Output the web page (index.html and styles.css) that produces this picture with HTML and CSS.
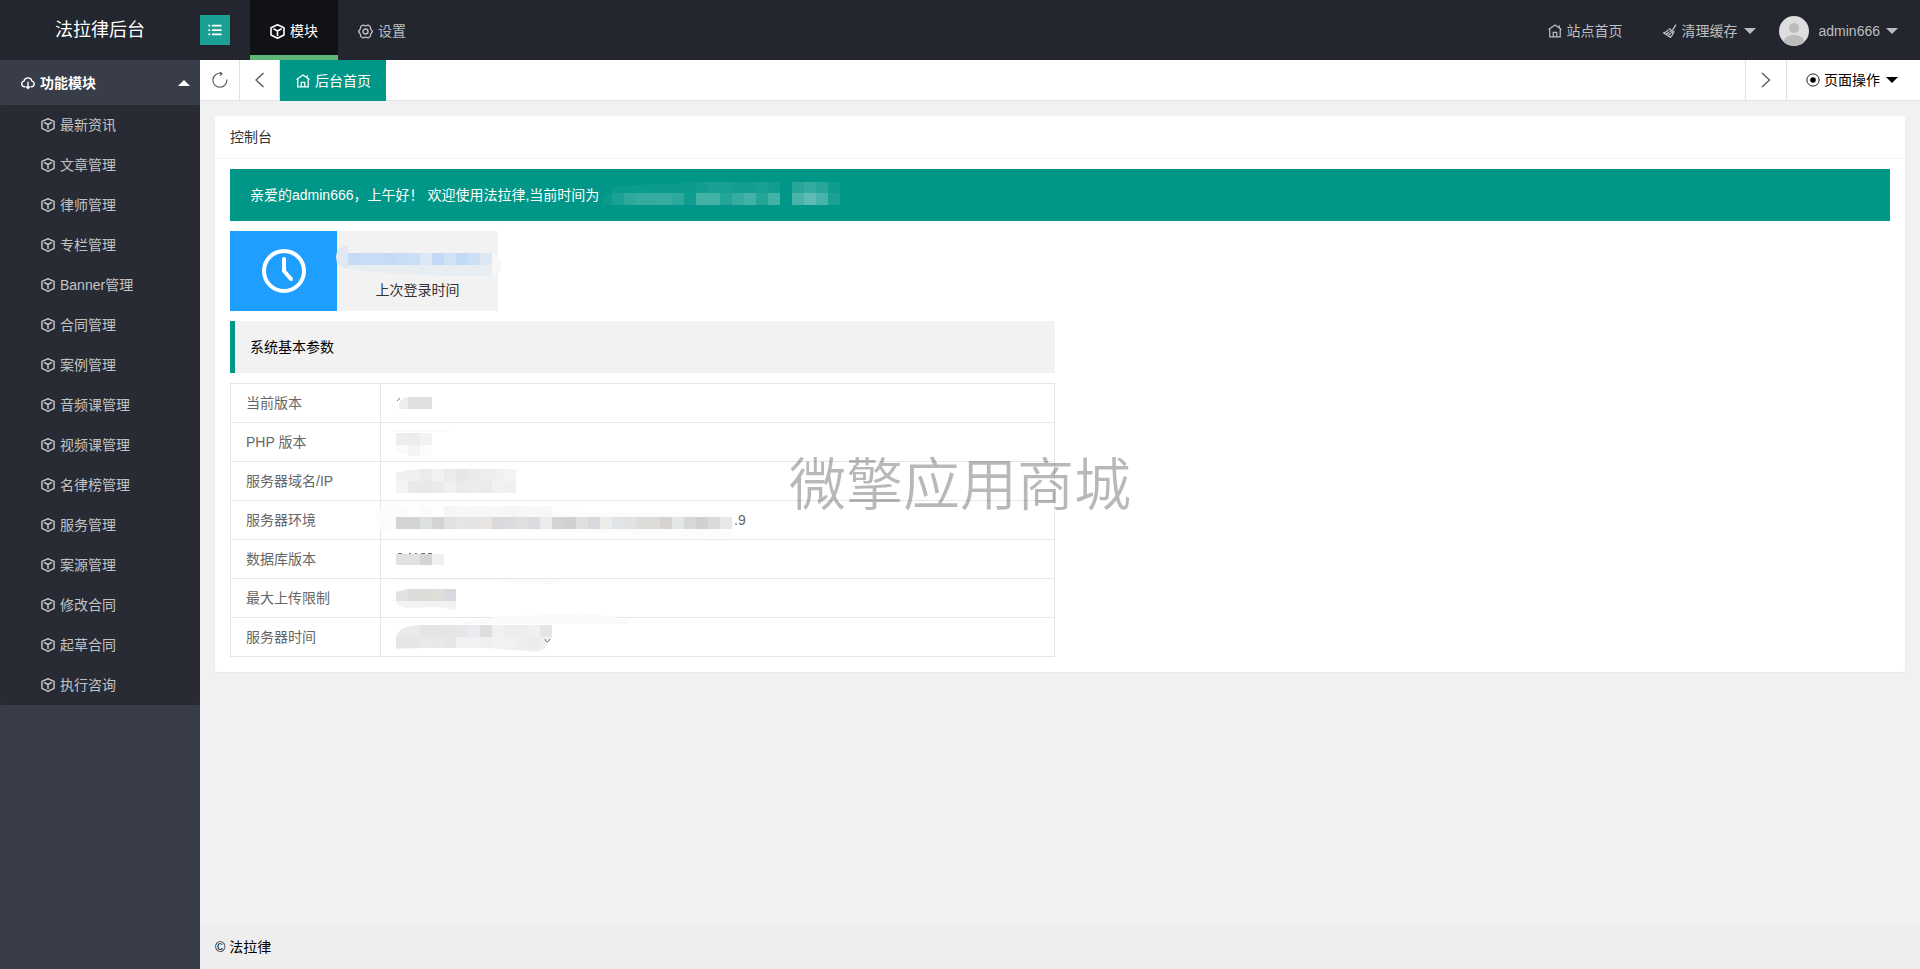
FILE: index.html
```html
<!DOCTYPE html>
<html lang="zh-CN">
<head>
<meta charset="utf-8">
<title>法拉律后台</title>
<link rel="stylesheet" href="styles.css">
</head>
<body>
<svg class="sprite" aria-hidden="true">
  <symbol id="cube" viewBox="0 0 16 16"><path d="M8 .9 14.900 3.900v7.900L8 15.200 1.100 11.800V3.900zM4.200 5.400 8 7.400l4-2.100M8 7.400v4.800" fill="none" stroke="currentColor" stroke-width="1.700" stroke-linejoin="round" stroke-linecap="round"/></symbol>
  <symbol id="gear" viewBox="0 0 16 16"><path d="M5.300 1.100 8 2l2.700-.9 2.300 1.500.5 2.700L15.400 8l-1.900 2.700-.5 2.700-2.300 1.500L8 14l-2.700.9L3 13.400l-.5-2.700L.6 8l1.900-2.700L3 2.600z" fill="none" stroke="currentColor" stroke-width="1.400" stroke-linejoin="round"/><circle cx="8" cy="8" r="2.700" fill="none" stroke="currentColor" stroke-width="1.500"/></symbol>
  <symbol id="home" viewBox="0 0 16 16"><path d="M.6 6.400 8 1.200l7.400 5.200M2 6v8.700h12V6M12.800 1.500v3M6 14V9.500h4V14" fill="none" stroke="currentColor" stroke-width="1.400"/></symbol>
  <symbol id="broom" viewBox="0 0 16 16"><path d="M14.800.8 11 7M6.600 5.200l6.600 4.300M6.300 6.500Q4 9.500.8 10.200L8.500 15.200Q11 13 12 9.500M3.500 11.500l3.500-2M6 13.200l3-2.700M7.500 8l3.500 2.200" fill="none" stroke="currentColor" stroke-width="1.500"/></symbol>
  <symbol id="cloud" viewBox="0 0 16 16"><path d="M5 12.300H4A3.300 3.300 0 0 1 3.300 5.800 4.800 4.800 0 0 1 12.600 5.800 3.300 3.300 0 0 1 12 12.300H11M8 6.500v7.500M6 12l2 2.200L10 12" fill="none" stroke="currentColor" stroke-width="1.600"/></symbol>
  <symbol id="list" viewBox="0 0 16 16"><path d="M4.500 3H15.500M4.500 8H15.500M4.500 13H15.500M.5 3h2M.5 8h2M.5 13h2" fill="none" stroke="currentColor" stroke-width="2"/></symbol>
  <symbol id="refresh" viewBox="0 0 16 16"><path d="M9 1.300A7 7 0 1 0 14.900 7.500M7.500 0 10 1.500 8 3.600" fill="none" stroke="currentColor" stroke-width="1.100"/></symbol>
  <symbol id="left" viewBox="0 0 16 16"><path d="M11.500 1 4 8l7.500 7" fill="none" stroke="currentColor" stroke-width="1.300"/></symbol>
  <symbol id="right" viewBox="0 0 16 16"><path d="m4 1 7.500 7L4 15" fill="none" stroke="currentColor" stroke-width="1.300"/></symbol>
  <symbol id="radio" viewBox="0 0 16 16"><circle cx="8" cy="8" r="7" fill="none" stroke="currentColor"/><circle cx="8" cy="8" r="3.200" fill="currentColor"/></symbol>
</svg>
<div class="app">
  <header class="header">
    <div class="brand">法拉律后台</div>
    <button class="toggle" type="button" aria-label="切换菜单"><svg class="icon"><use href="#list"/></svg></button>
    <nav class="topnav">
      <a class="active" href="#"><svg class="icon"><use href="#cube"/></svg>模块</a>
      <a href="#"><svg class="icon"><use href="#gear"/></svg>设置</a>
    </nav>
    <nav class="usernav">
      <a class="site" href="#"><svg class="icon"><use href="#home"/></svg>站点首页</a>
      <a class="cache" href="#"><svg class="icon"><use href="#broom"/></svg>清理缓存<span class="caret"></span></a>
      <a class="user" href="#"><svg class="avatar" viewBox="0 0 30 30"><circle cx="15" cy="15" r="15" fill="#dedede"/><circle cx="15" cy="12" r="5" fill="#bcbcbc"/><path d="M5 26.200V24.500Q7 19 15 19t10 5.500V26.200Q21 30 15 30T5 26.200" fill="#bcbcbc"/></svg>admin666<span class="caret"></span></a>
    </nav>
  </header>
  <div class="body">
    <aside class="sidebar">
      <button class="group" type="button"><svg class="icon"><use href="#cloud"/></svg>功能模块<span class="caret up"></span></button>
      <nav class="menu">
        <a href="#"><svg class="icon"><use href="#cube"/></svg>最新资讯</a>
        <a href="#"><svg class="icon"><use href="#cube"/></svg>文章管理</a>
        <a href="#"><svg class="icon"><use href="#cube"/></svg>律师管理</a>
        <a href="#"><svg class="icon"><use href="#cube"/></svg>专栏管理</a>
        <a href="#"><svg class="icon"><use href="#cube"/></svg>Banner管理</a>
        <a href="#"><svg class="icon"><use href="#cube"/></svg>合同管理</a>
        <a href="#"><svg class="icon"><use href="#cube"/></svg>案例管理</a>
        <a href="#"><svg class="icon"><use href="#cube"/></svg>音频课管理</a>
        <a href="#"><svg class="icon"><use href="#cube"/></svg>视频课管理</a>
        <a href="#"><svg class="icon"><use href="#cube"/></svg>名律榜管理</a>
        <a href="#"><svg class="icon"><use href="#cube"/></svg>服务管理</a>
        <a href="#"><svg class="icon"><use href="#cube"/></svg>案源管理</a>
        <a href="#"><svg class="icon"><use href="#cube"/></svg>修改合同</a>
        <a href="#"><svg class="icon"><use href="#cube"/></svg>起草合同</a>
        <a href="#"><svg class="icon"><use href="#cube"/></svg>执行咨询</a>
      </nav>
    </aside>
    <div class="main">
      <div class="tabs">
        <button class="tool" type="button" aria-label="刷新"><svg class="icon big"><use href="#refresh"/></svg></button>
        <button class="tool" type="button" aria-label="向左"><svg class="icon big"><use href="#left"/></svg></button>
        <a class="tab" href="#"><svg class="icon"><use href="#home"/></svg>后台首页</a>
        <button class="tool next" type="button" aria-label="向右"><svg class="icon big"><use href="#right"/></svg></button>
        <button class="ops" type="button"><svg class="icon"><use href="#radio"/></svg>页面操作<span class="caret"></span></button>
      </div>
      <main class="content">
        <section class="card">
          <h1 class="card-title">控制台</h1>
          <div class="card-body">
            <div class="welcome">
              <span>亲爱的admin666，上午好！ 欢迎使用法拉律,当前时间为</span>
              <svg class="mosaic welcome-mask" id="m-welcome"></svg>
            </div>
            <div class="stat">
              <div class="stat-icon"><svg viewBox="0 0 46 46"><circle cx="23" cy="23" r="20" fill="none" stroke="#fff" stroke-width="4"/><path d="M23 11v12l7 8" fill="none" stroke="#fff" stroke-width="4" stroke-linecap="round" stroke-linejoin="round"/></svg></div>
              <div class="stat-info">
                <svg class="mosaic login-mask" id="m-login"></svg>
                <div>上次登录时间</div>
              </div>
            </div>
            <div class="params">
              <h2 class="quote">系统基本参数</h2>
              <table class="table">
                <tr><th scope="row">当前版本</th><td><svg class="mosaic" id="m0"></svg></td></tr>
                <tr><th scope="row">PHP 版本</th><td><svg class="mosaic" id="m1"></svg></td></tr>
                <tr><th scope="row">服务器域名/IP</th><td><svg class="mosaic" id="m2"></svg></td></tr>
                <tr><th scope="row">服务器环境</th><td><div class="env"><svg class="mosaic env-mask" id="m3"></svg>.9</div></td></tr>
                <tr><th scope="row">数据库版本</th><td><svg class="mosaic" id="m4"></svg></td></tr>
                <tr><th scope="row">最大上传限制</th><td><svg class="mosaic" id="m5"></svg></td></tr>
                <tr><th scope="row">服务器时间</th><td><svg class="mosaic" id="m6"></svg></td></tr>
              </table>
            </div>
          </div>
        </section>
      </main>
      <footer class="footer">© 法拉律</footer>
    </div>
  </div>
  <div class="watermark">微擎应用商城</div>
</div>
<script src="mosaic.js"></script>
</body>
</html>
```
FILE: mosaic.js
```js
// Draws the blurred-out values: smudge paths, rows of 12px blocks, leftover strokes.
const masks = {
  'm-welcome': {
    rows: [
      [12, -2, 11, '. . . . . . #0b9b8d #119d90 #1ba194 #17a093 #119d90 #119d90 #17a093 #119d90 . #27a699 #33ab9f #27a699 #0f9d8f'],
      [12, 9, 12, '#1ba194 #2da99c #33ab9f #33ab9f #36aca0 #2da99c #0f9d8f #42b1a6 #42b1a6 #22a497 #36aca0 #42b1a6 #22a497 #42b1a6 . #48b3a8 #5dbcb2 #48b3a8 #1ba194']
    ],
    smudges: [['M2 21V14Q5 8 12 8V21zM12 9V2L84-1V9z', '#0b9b8d']]
  },
  'm-login': {
    smudges: [
      ['M11 0Q-1 2-1 12T11 24z', '#dfe9f3'],
      ['M155 8Q164 12 164 21T155 32z', '#f7f7f8'],
      ['M11 20H155V31L110 31 30 27 11 23z', '#e8edf2']
    ],
    rows: [[11, 8, 12, '#c5daf6 #c8dcf5 #c8dcf5 #c5daf6 #c8dcf5 #cadff4 #dce8f5 #c2d8f6 #d0e2f4 #c0dbf5 #cddff5 #dce7f4']]
  },
  m0: {
    smudges: [['M3 16Q3 4 12 4V16z', '#ededed']],
    rows: [[12, 4, 12, '#dfdfdf #dedfdf']],
    strokes: 'M1 8 4 5'
  },
  m1: {
    smudges: [['M-4-1 10-3 54-1V0H-4zM0 13H12V23Q0 22 0 13', '#fafafa']],
    rows: [[0, 1, 12, '#ededed #ececec #f2f2f2'], [12, 13, 11, '#f4f4f4 #fbfbfb']]
  },
  m2: {
    smudges: [['M0 10V2Q8-1 24-2V10z', '#f0f0f0']],
    rows: [
      [24, -2, 12, '#ebebeb #f1f2f4 #ebebeb #e6e6e6 #eaeaea #eeeeee #efefef #f4f4f4'],
      [0, 10, 12, '#f4f4f4 #e9e9e9 #e8e8e8 #eaeaea #f2f0ef #e9ebed #ececec #ebebeb #f2f2f2 #eef0f0']
    ]
  },
  m3: {
    smudges: [['M-10-5H54L110-2H156V1L230 3 325 3Q338 7 338 17T327 27L250 25 115 20H-15Q-19 15-19 7T-10-5', '#fcfcfc']],
    rows: [
      [0, -4, 11, '#fbfbfb #fefefe #fbfbfb #fefefe #f6f6f6 #f8f8f8 #f7f7f7 #f7f7f7 #f8f8f8 #f6f6f6 #f7f7f7 #f8f8f8 #f7f7f7'],
      [0, 7, 12, '#d4d3d2 #d4d4d4 #dce0df #d5d3d1 #e1e1e1 #e5e5e5 #e5e4e2 #e8e5e3 #d9dadc #dadbde #dfdfdf #dbdce0 #eeebea #d3d3d4 #d0d0d0 #dfe1e0 #d8d9dd #eeecea #e1e4e7 #e2e2e2 #dddcd9 #dcdcda #d5d2d0 #e2e7e7 #d7d7d4 #d0d0d0 #dadad8 #e8e8e8']
    ]
  },
  m4: {
    rows: [[0, 5, 11, '#e1e1e1 #e1e1e1 #d7d4d4 #efefef']],
    strokes: 'M2 4.500H6M13 4.500H15M19 4.500H21M25 4.500H29M32 4.500H36'
  },
  m5: {
    smudges: [
      ['M2-9H166V-7Q160-4 150-4L100-8H2z', '#fafafa'],
      ['M0 12H60V22L40 19 14 20Q0 19 0 12', '#f2f2f2'],
      ['M0 13V4L12 1V13z', '#e1e1e1']
    ],
    rows: [[12, 1, 12, '#dcdcdb #dbdbd8 #deddd7 #d8d9de']]
  },
  m6: {
    smudges: [
      ['M60-3 100-10 180-14Q225-12 234-3z', '#fafafa'],
      ['M0 10Q2-1 24-2V10z', '#eaeaea'],
      ['M0 10H156L148 22Q142 26 130 24L80 20 30 21 0 22z', '#eeeff0']
    ],
    rows: [
      [24, -2, 12, '#e3e4e4 #e3e4e4 #e4e5e4 #e7e7e5 #ebecf0 #dedede #f0f1f1 #ededed #ededed #f0f0f0 #e3e6e4'],
      [0, 10, 11, '#e6e6e6 #e5e5e5 #e9e9e9 #e8e8e8 #e5e7e6 #f0f1f2 #f1f2f4 #efefef #f2f2f2 #f1f1f1 #eeeeee #ebeced']
    ],
    strokes: 'M149 12Q151 18 154 12'
  }
};

const ns = 'http://www.w3.org/2000/svg';
function add(svg, tag, attrs) {
  const node = document.createElementNS(ns, tag);
  Object.entries(attrs).forEach(([key, value]) => node.setAttribute(key, value));
  svg.append(node);
}

Object.entries(masks).forEach(([id, { smudges = [], rows = [], strokes }]) => {
  const svg = document.getElementById(id);
  smudges.forEach(([d, fill]) => add(svg, 'path', { d, fill }));
  rows.forEach(([x, y, height, colours]) => colours.split(' ').forEach((fill, i) => {
    if (fill !== '.') add(svg, 'rect', { x: x + i * 12, y, width: 12, height, fill });
  }));
  if (strokes) add(svg, 'path', { d: strokes, fill: 'none', stroke: '#777' });
});
```
FILE: styles.css
```css
* { box-sizing: border-box; }

body {
  margin: 0;
  color: #333;
  background: #f1f1f1;
  font: 14px/24px "Liberation Sans", "Noto Sans CJK SC", sans-serif;
}

a { color: inherit; text-decoration: none; }
button { border: 0; padding: 0; margin: 0; background: none; color: inherit; font: inherit; cursor: pointer; }
h1, h2 { margin: 0; font-size: 14px; font-weight: 400; }

.sprite { position: absolute; width: 0; height: 0; }
.icon { width: 14px; height: 14px; flex: none; margin-right: 5px; }
.icon.big { width: 16px; height: 16px; margin: 0; }
.caret {
  margin-left: 6px;
  border: 6px solid transparent;
  border-top-color: currentColor;
  border-bottom-width: 0;
}
.caret.up { border-width: 0 6px 6px; border-bottom-color: currentColor; }

.app { display: flex; flex-direction: column; min-height: 100vh; }

.header { display: flex; height: 60px; align-items: center; background: #23262e; color: #bdbebf; }
.brand { width: 200px; padding-right: 37px; padding-left: 55px; color: #fff; font-size: 18px; white-space: nowrap; }
.toggle { display: flex; width: 30px; height: 30px; align-items: center; justify-content: center; background: #1aa094; color: #fff; }
.toggle .icon { margin: 0; }
.topnav { display: flex; height: 100%; margin-left: 20px; }
.topnav a { display: flex; align-items: center; padding: 2px 20px 0; }
.topnav .icon { width: 15px; height: 15px; }
.topnav .active { border-top: 5px solid #111215; border-bottom: 5px solid #5fb878; background: #111215; color: #fff; }
.usernav { display: flex; height: 100%; margin-left: auto; }
.usernav a { display: flex; align-items: center; padding: 2px 20px 0; }
.usernav .user { padding-right: 22px; padding-left: 3px; }
.avatar { width: 30px; height: 30px; margin-right: 10px; }

.body { display: flex; flex: 1; }
.sidebar { width: 200px; flex: none; background: #393d49; color: #c2c3c5; }
.group { display: flex; width: 100%; height: 45px; align-items: center; padding: 0 10px 0 21px; color: #fff; font-weight: 700; }
.group .caret { margin-left: auto; }
.menu { border-radius: 2px; background: #282b33; }
.menu a { display: flex; height: 40px; align-items: center; padding-left: 41px; }

.main { display: flex; min-width: 0; flex: 1; flex-direction: column; }
.tabs { display: flex; height: 41px; border-bottom: 1px solid #e2e2e2; background: #fff; }
.tool { display: flex; width: 40px; align-items: center; justify-content: center; border-right: 1px solid #e2e2e2; color: #555; }
.tool.next { width: 42px; margin-left: auto; border-left: 1px solid #e2e2e2; }
.tab { display: flex; align-items: center; height: 41px; padding: 0 15px 0 16px; background: #009688; color: #fff; }
.ops { display: flex; align-items: center; padding: 0 22px 0 19px; color: #000; }
.ops .icon { margin-right: 4px; }

.content { flex: 1; padding: 15px; }
.card { border-radius: 2px; background: #fff; box-shadow: 0 1px 2px rgba(0, 0, 0, .05); }
.card-title { padding: 0 15px; border-bottom: 1px solid #f6f6f6; line-height: 42px; }
.card-body { padding: 10px 15px 15px; }
.mosaic { display: block; height: 20px; overflow: visible; }
.welcome { display: flex; padding: 15px 20px; background: #009688; color: #fff; line-height: 22px; }
.welcome-mask { flex: 1; margin-left: 1px; }
.stat { display: flex; margin-top: 10px; }
.stat-icon { display: flex; width: 107px; height: 80px; align-items: center; justify-content: center; background: #1e9fff; }
.stat-icon svg { width: 46px; height: 46px; }
.stat-info { width: 161px; padding-top: 14px; background: #f2f2f2; text-align: center; }
.login-mask { width: 161px; height: 33px; }
.params { width: 50%; margin-top: 10px; padding-right: 5px; }
.quote { padding: 15px; border-left: 5px solid #009688; border-radius: 0 2px 2px 0; background: #f2f2f2; color: #000; line-height: 22px; }
.table { width: 100%; margin-top: 10px; border-collapse: collapse; table-layout: fixed; color: #666; line-height: 20px; }
.table th, .table td { padding: 9px 15px; border: 1px solid #e6e6e6; text-align: left; font-weight: 400; }
.table th { width: 150px; }
.env { display: flex; }
.env-mask { width: 338px; flex: none; }

.footer { padding: 0 15px; background: #eee; color: #000; line-height: 44px; }

.watermark {
  position: fixed;
  inset: 0;
  display: flex;
  align-items: center;
  justify-content: center;
  padding-bottom: 10px;
  color: rgba(0, 0, 0, .28);
  font-size: 57px;
  font-weight: 350;
  font-family: "Noto Sans CJK SC", sans-serif;
  pointer-events: none;
}
```
